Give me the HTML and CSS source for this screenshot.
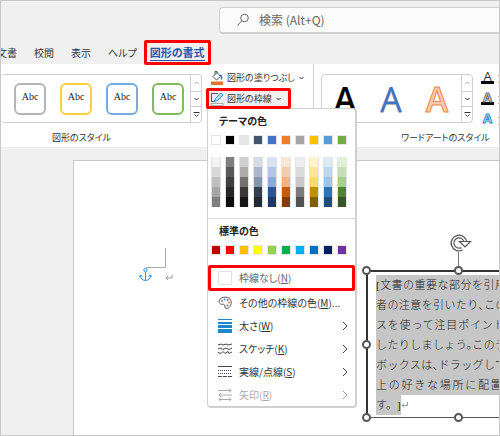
FILE: index.html
```html
<!DOCTYPE html>
<html lang="ja">
<head>
    <meta charset="utf-8">
    <title>図形の書式</title>
    <link rel="stylesheet" href="styles.css">
</head>
<body>
<div class="app">
    <header class="titlebar">
        <label class="search">
            <svg width="14" height="14" viewBox="0 0 14 14" fill="none" stroke="#666"><circle cx="8.5" cy="5" r="3.8"/><path d="M5.8 7.8L1.5 12.5"/></svg>
            <input type="text" placeholder="検索 (Alt+Q)" aria-label="検索">
        </label>
    </header>
    <nav class="tabs">
        <a href="#" class="tab">文書</a>
        <a href="#" class="tab">校閲</a>
        <a href="#" class="tab">表示</a>
        <a href="#" class="tab">ヘルプ</a>
        <a href="#" class="tab active"><span>図形の書式</span></a>
    </nav>

    <div class="ribbon">
        <section class="group shapes">
            <div class="row">
                <div class="gallery">
                    <div class="cells">
                        <button class="style gray">Abc</button>
                        <button class="style yellow">Abc</button>
                        <button class="style blue">Abc</button>
                        <button class="style green">Abc</button>
                    </div>
                    <div class="scroll">
                        <button aria-label="上へ"><svg width="7" height="6" viewBox="0 0 7 6" fill="none" stroke="#aaa"><path d="M1.5 4l2-2 2 2"/></svg></button>
                        <button aria-label="下へ"><svg width="7" height="6" viewBox="0 0 7 6" fill="none" stroke="#333"><path d="M1.5 2l2 2 2-2"/></svg></button>
                        <button aria-label="その他"><svg width="7" height="7" viewBox="0 0 7 7" fill="none" stroke="#333"><path d="M.5 1.5h6M1.5 3.5l2 2 2-2"/></svg></button>
                    </div>
                </div>
                <div class="commands">
                    <button class="command">
                        <svg width="14" height="14" viewBox="0 0 14 14" fill="none"><path d="M3 5.5L7 1.5l3.5 4L6.5 9z" stroke="#555"/><path d="M5 3.5V.5h2v2" stroke="#555"/><path d="M10 4c1.5.5 2 2 1.500 4.500" stroke="#2b7cd3" stroke-width="1.5"/><path d="M1 10.500h12V14H1z" fill="#e8702a"/></svg>
                        <span>図形の塗りつぶし</span>
                        <svg width="7" height="6" viewBox="0 0 7 6" fill="none" stroke="#333"><path d="M1.5 2l2 2 2-2"/></svg>
                    </button>
                    <div class="dropdown">
                        <button class="command open">
                            <svg width="14" height="14" viewBox="0 0 14 14" fill="none"><path d="M8 1.5H1.5v8h3" stroke="#555"/><path d="M4.500 9.500l1-3L11 1l2 2-5.500 5.500z" fill="#b9dff7" stroke="#2b8fd8"/><path d="M1 11.500h12v2H1z" fill="#fff" stroke="#aaa"/></svg>
                            <span>図形の枠線</span>
                            <svg width="7" height="6" viewBox="0 0 7 6" fill="none" stroke="#333"><path d="M1.5 2l2 2 2-2"/></svg>
                        </button>
                        <div class="menu">
                            <h2>テーマの色</h2>
                            <div class="swatches" id="theme"></div>
                            <div class="shades" id="shades"></div>
                            <hr>
                            <h2>標準の色</h2>
                            <div class="swatches" id="standard"></div>
                            <button class="item marked">
                                <i class="none"></i>
                                <span>枠線なし(<u>N</u>)</span>
                            </button>
                            <button class="item">
                                <svg width="14" height="14" viewBox="0 0 14 14" fill="none"><path d="M1 5C2 2 5 .8 8 1.2c3.500.5 5.500 3 5.200 6-.3 3.300-2.700 5.600-5 5.300-2-.3-.7-2.500-1.700-3.700C5.500 7.500 4 9 2.500 8 1.300 7.200.8 6 1 5z" stroke="#555"/><circle cx="4" cy="5" r="1" fill="#777"/><circle cx="6.500" cy="3.500" r="1" fill="#2b8fd8"/><circle cx="9.500" cy="4" r="1" fill="#e04040"/><circle cx="11" cy="6.500" r="1" fill="#e8702a"/><circle cx="9.500" cy="9.500" r="1" fill="#3a9c46"/></svg>
                                <span>その他の枠線の色(<u>M</u>)...</span>
                            </button>
                            <button class="item">
                                <svg width="14" height="14" viewBox="0 0 14 14" fill="#1b87cc"><path d="M0 0h14v1H0zM0 3h14v2H0zM0 6h14v3H0zM0 10h14v4H0z"/></svg>
                                <span>太さ(<u>W</u>)</span>
                                <svg class="more" width="6" height="10" viewBox="0 0 6 10"><path d="M1 1l4 4-4 4"/></svg>
                            </button>
                            <button class="item">
                                <svg width="14" height="14" viewBox="0 0 14 14" fill="none" stroke="#444"><path d="M0 3l3-1 2 1 3-1 2 1 4-1M0 7l2-1 3 1.500 3-1.500 3 1.500 3-1.500M0 10.500l3 1 2-2 2 2 3-2 1 2 3-1.500"/></svg>
                                <span>スケッチ(<u>K</u>)</span>
                                <svg class="more" width="6" height="10" viewBox="0 0 6 10"><path d="M1 1l4 4-4 4"/></svg>
                            </button>
                            <button class="item">
                                <svg width="14" height="14" viewBox="0 0 14 14" fill="none" stroke="#444"><path d="M0 1.500h14"/><path d="M0 5.500h14M0 8.500h14" stroke-dasharray="1 1"/><path d="M0 11.500h14" stroke-dasharray="4 1"/></svg>
                                <span>実線/点線(<u>S</u>)</span>
                                <svg class="more" width="6" height="10" viewBox="0 0 6 10"><path d="M1 1l4 4-4 4"/></svg>
                            </button>
                            <button class="item" disabled>
                                <svg width="14" height="14" viewBox="0 0 14 14" fill="none" stroke="#aaa"><path d="M0 2.500h13M11 .5l2 2-2 2M1 7h13M3 5L1 7l2 2M1 11.500h12M3 9.500l-2 2 2 2M11 9.500l2 2-2 2"/></svg>
                                <span>矢印(<u>R</u>)</span>
                                <svg class="more" width="6" height="10" viewBox="0 0 6 10"><path d="M1 1l4 4-4 4"/></svg>
                            </button>
                        </div>
                    </div>
                </div>
            </div>
            <div class="caption">図形のスタイル</div>
        </section>

        <section class="group wordart">
            <div class="row">
                <div class="gallery">
                    <div class="cells">
                        <button class="art black">A</button>
                        <button class="art blue">A</button>
                        <button class="art orange">A</button>
                    </div>
                    <div class="scroll">
                        <button aria-label="上へ"><svg width="7" height="6" viewBox="0 0 7 6" fill="none" stroke="#aaa"><path d="M1.5 4l2-2 2 2"/></svg></button>
                        <button aria-label="下へ"><svg width="7" height="6" viewBox="0 0 7 6" fill="none" stroke="#333"><path d="M1.5 2l2 2 2-2"/></svg></button>
                        <button aria-label="その他"><svg width="7" height="7" viewBox="0 0 7 7" fill="none" stroke="#333"><path d="M.5 1.5h6M1.5 3.5l2 2 2-2"/></svg></button>
                    </div>
                </div>
                <div class="text-tools">
                    <button><b class="fill">A</b>文字の塗りつぶし</button>
                    <button><b class="outline">A</b>文字の輪郭</button>
                    <button><b class="effect">A</b>文字の効果</button>
                </div>
            </div>
            <div class="caption">ワードアートのスタイル</div>
        </section>
    </div>

    <main class="workspace">
        <div class="page">
            <svg class="anchor" width="34" height="34" viewBox="0 0 34 34" fill="none">
                <path d="M7 19.500h19.500V0" stroke="#aaa"/>
                <g stroke="#2b8fd8"><circle cx="6.500" cy="22" r="1.700"/><path d="M6.500 24v8M1.500 27.500c0 3 2 5 5 5s5-2 5-5M.5 29l1-2 2 1.500M12.500 29l-1-2-2 1.500"/></g>
                <path d="M33 27v3h-6M29 28l-2 2 2 2" stroke="#999"/>
            </svg>
            <div class="textbox">
                <p>
                    <span class="line">[文書の重要な部分を引用して読</span>
                    <span class="line">者の注意を引いたり、このスペー</span>
                    <span class="line">スを使って注目ポイントを強調</span>
                    <span class="line">したりしましょう。このテキスト</span>
                    <span class="line">ボックスは、ドラッグしてページ</span>
                    <span class="line">上の好きな場所に配置できま</span>
                    <span class="last">す。]</span><svg width="8" height="8" viewBox="0 0 8 8" fill="none" stroke="#999"><path d="M6.500 1v3.500H1M3 2.500l-2 2 2 2"/></svg>
                </p>
                <i class="stem"></i>
                <svg class="rotate" width="22" height="18" viewBox="0 0 22 18" fill="none"><path d="M15.500 9A6.500 6.500 0 1 0 12 14.800" stroke="#555" stroke-width="4"/><path d="M15.500 9A6.500 6.500 0 1 0 12 14.800" stroke="#fff" stroke-width="1.500"/><path d="M9.500 7.500h11l-5.500 5.500z" fill="#fff" stroke="#555" stroke-width="1.200"/></svg>
                <i class="handle nw"></i>
                <i class="handle n"></i>
                <i class="handle w"></i>
                <i class="handle sw"></i>
                <i class="handle s"></i>
            </div>
        </div>
    </main>
</div>
<script>
    const THEME = ['#ffffff', '#000000', '#e7e6e6', '#44546a', '#4472c4', '#ed7d31', '#a5a5a5', '#ffc000', '#5b9bd5', '#70ad47'];
    const STANDARD = ['#c00000', '#ff0000', '#ffc000', '#ffff00', '#92d050', '#00b050', '#00b0f0', '#0070c0', '#002060', '#7030a0'];
    // one row per brightness step, light to dark
    const SHADES = [
        ['#f2f2f2', '#7f7f7f', '#d0cece', '#d6dce4', '#d9e2f3', '#fbe5d5', '#ededed', '#fff2cc', '#deebf6', '#e2efd9'],
        ['#d8d8d8', '#595959', '#aeabab', '#adb9ca', '#b4c6e7', '#f7cbac', '#dbdbdb', '#fee599', '#bdd7ee', '#c5e0b3'],
        ['#bfbfbf', '#3f3f3f', '#757070', '#8496b0', '#8eaadb', '#f4b183', '#c9c9c9', '#ffd965', '#9cc3e5', '#a8d08d'],
        ['#a5a5a5', '#262626', '#3a3838', '#323f4f', '#2f5496', '#c55a11', '#7b7b7b', '#bf9000', '#2e75b5', '#538135'],
        ['#7f7f7f', '#0c0c0c', '#171616', '#222a35', '#1f3864', '#833c0b', '#525252', '#7f6000', '#1e4e79', '#375623']
    ];

    function addSwatches(id, colors) {
        const box = document.getElementById(id);
        colors.forEach(color => {
            const button = document.createElement('button');
            button.style.backgroundColor = color;
            button.setAttribute('aria-label', color);
            box.appendChild(button);
        });
    }

    addSwatches('theme', THEME);
    addSwatches('shades', SHADES.flat());
    addSwatches('standard', STANDARD);
</script>
</body>
</html>
```
FILE: styles.css
```css
* {
    box-sizing: border-box;
}
body {
    margin: 0;
    font-family: "Noto Sans CJK JP", sans-serif;
    font-size: 10px;
    line-height: 16px;
    font-feature-settings: "palt";
    color: #333;
    background: #fff;
}
button {
    font: inherit;
    font-feature-settings: inherit;
    color: inherit;
    background: none;
    border: 0;
    padding: 0;
}
svg {
    display: block;
    flex: none;
}
.app {
    display: flex;
    flex-direction: column;
    min-height: 100vh;
    border: 1px solid #c8c8c8;
    background: #f0f0f0;
    overflow: hidden;
}

/* title bar and tabs */
.titlebar {
    padding: 6px 0 7px 218px;
}
.search {
    display: flex;
    align-items: center;
    gap: 9px;
    height: 27px;
    padding-left: 16px;
    border: 1px solid #d0d0d0;
    border-right: 0;
    border-bottom-width: 2px;
    border-radius: 4px 0 0 4px;
    background: #fbfbfb;
}
.search input {
    flex: 1;
    min-width: 0;
    border: 0;
    padding: 0;
    background: none;
    font: inherit;
    font-size: 12px;
}
.search input::placeholder {
    color: #666;
    opacity: 1;
}
.tabs {
    display: flex;
    align-items: center;
    gap: 17px;
    height: 23px;
    margin-left: -4px;
}
.tab {
    color: #333;
    text-decoration: none;
}
.tab.active {
    flex: none;
    margin-left: -10px;
    height: 25px;
    padding: 2px 3px;
    border: 3px solid #f00;
    border-radius: 2px;
    color: #1f57b0;
    font-size: 11px;
    font-weight: bold;
    z-index: 1;
}
.tab.active span {
    display: block;
    line-height: 15px;
    border-bottom: 1px solid #1f57b0;
}

/* ribbon */
.ribbon {
    display: flex;
    height: 83px;
    background: #fff;
    font-size: 9px;
}
.group {
    flex: none;
    padding-top: 10px;
}
.row {
    display: flex;
    height: 49px;
}
.gallery {
    display: flex;
    flex: none;
    border: 1px solid #d0d0d0;
    border-radius: 4px;
}
.shapes .gallery {
    width: 201px;
    border-left: 0;
}
.cells {
    display: flex;
    flex: 1;
    align-items: center;
}
.shapes .cells {
    gap: 14px;
    padding-left: 13px;
}
.style {
    width: 32px;
    height: 32px;
    border: 2px solid #b5b5b5;
    border-radius: 6px;
    padding-bottom: 4px;
    font-family: "Liberation Serif", serif;
    font-size: 10px;
    color: #222;
}
.style.yellow {
    border-color: #ffcf40;
}
.style.blue {
    border-color: #77aadd;
}
.style.green {
    border-color: #83b960;
}
.scroll {
    display: grid;
    grid-template-rows: repeat(3, 1fr);
    width: 11px;
    border-left: 1px solid #d0d0d0;
}
.scroll button {
    display: flex;
    align-items: center;
    justify-content: center;
}
.scroll button + button {
    border-top: 1px solid #d0d0d0;
}
.commands {
    margin: -7px 0 0 4px;
}
.command {
    display: flex;
    align-items: center;
    gap: 3px;
    height: 21px;
    padding-left: 4px;
    white-space: nowrap;
}
.dropdown {
    position: relative;
}
.command.open {
    width: 85px;
    padding-left: 1px;
    border: 3px solid #f00;
    border-radius: 2px;
    background: #eee;
    position: relative;
    z-index: 2;
}
.caption {
    margin-top: 7px;
    line-height: 16px;
}
.shapes {
    width: 313px;
    border-right: 1px solid #d0d0d0;
}
.shapes .caption {
    padding-left: 51px;
}
.wordart {
    padding-left: 7px;
}
.wordart .caption {
    padding-left: 80px;
}
.wordart .gallery {
    width: 152px;
}
.art {
    width: 46px;
    font-family: "Open Sans", sans-serif;
    font-size: 34px;
    line-height: 40px;
    font-weight: 600;
}
.art.black {
    color: #000;
}
.art.blue {
    color: #4472c4;
    font-weight: 500;
    text-shadow: 0 1px 1px #aaa;
}
.art.orange {
    color: #f8cbad;
    -webkit-text-stroke: 1px #ed8b4a;
}
.text-tools {
    display: grid;
    align-content: start;
    gap: 5px;
    margin: -3px 0 0 8px;
}
.text-tools button {
    display: flex;
    gap: 4px;
    height: 16px;
    white-space: nowrap;
}
.text-tools b {
    width: 13px;
    height: 13px;
    font-family: "Open Sans", sans-serif;
    font-size: 13px;
    line-height: 11px;
    text-align: center;
}
.text-tools .fill {
    font-weight: normal;
    border-bottom: 3px solid #000;
}
.text-tools .outline {
    color: #fff;
    -webkit-text-stroke: 1px #666;
    border-bottom: 3px solid #000;
}
.text-tools .effect {
    color: #fff;
    -webkit-text-stroke: 1px #1b87cc;
}

/* outline menu */
.menu {
    position: absolute;
    top: 20px;
    left: 1px;
    width: 150px;
    border: 1px solid #d0d0d0;
    border-right-width: 2px;
    border-bottom-width: 2px;
    border-radius: 0 4px 4px 4px;
    background: #fff;
    font-size: 10px;
    z-index: 1;
}
.menu h2 {
    margin: 4px 0 6px 11px;
    font-size: 10px;
    line-height: 16px;
    color: #222;
}
.swatches,
.shades {
    display: grid;
    grid-template-columns: repeat(10, 10px);
    column-gap: 4px;
    margin-left: 3px;
}
.swatches button {
    height: 10px;
    border: 1px solid #e4e4e4;
}
.shades {
    margin-top: 12px;
    grid-auto-rows: 10px;
}
.shades button {
    border: solid #e4e4e4;
    border-width: 0 1px;
}
.menu hr {
    margin: 11px 0 4px;
    border: 0;
    border-top: 1px solid #ddd;
}
.item {
    display: flex;
    align-items: center;
    gap: 7px;
    width: 100%;
    height: 23px;
    padding: 0 7px 0 10px;
    text-align: left;
    white-space: nowrap;
}
.item:disabled {
    color: #aaa;
}
.item.marked {
    height: 26px;
    margin-top: 10px;
    padding-left: 7px;
    border: 3px solid #f00;
    border-radius: 2px;
    color: #666;
}
.item .none {
    width: 14px;
    height: 14px;
    border: 1px solid #dde1e8;
    background: #fff;
}
.item u {
    text-underline-offset: 1px;
}
.more {
    margin-left: auto;
    fill: none;
    stroke: #444;
}
.item:disabled .more {
    stroke: #999;
}

/* document */
.workspace {
    display: flex;
    flex: 1;
    padding: 13px 0 0 72px;
}
.page {
    position: relative;
    flex: 1;
    border: 1px solid #c8c8c8;
    border-width: 1px 0 0 1px;
    background: #fff;
}
.anchor {
    position: absolute;
    left: 65px;
    top: 87px;
}
.textbox {
    position: absolute;
    left: 292px;
    top: 109px;
    width: 184px;
    padding: 3px 8px 2px;
    border: 2px solid #333;
    border-bottom: 1px solid #555;
}
.textbox p {
    margin: 0;
    font-family: "Liberation Serif", "Noto Sans CJK JP", serif;
    font-size: 11px;
    font-weight: 300;
    line-height: 20px;
    color: #222;
    font-feature-settings: "halt";
}
.line {
    display: block;
    text-align-last: justify;
    white-space: nowrap;
    background: #c6c6c6;
}
.last {
    display: inline-block;
    background: #c6c6c6;
    font-feature-settings: normal;
    text-spacing-trim: space-all;
}
.textbox p svg {
    display: inline-block;
}
.handle {
    position: absolute;
    width: 9px;
    height: 9px;
    border: 2px solid #555;
    border-radius: 50%;
    background: #fff;
}
.nw {
    left: -6px;
    top: -6px;
}
.n {
    left: 86px;
    top: -6px;
}
.w {
    left: -6px;
    top: 68px;
}
.sw {
    left: -6px;
    bottom: -5px;
}
.s {
    left: 86px;
    bottom: -5px;
}
.stem {
    position: absolute;
    left: 90px;
    top: -20px;
    height: 18px;
    border-left: 1px solid #777;
}
.rotate {
    position: absolute;
    left: 82px;
    top: -38px;
}
```
